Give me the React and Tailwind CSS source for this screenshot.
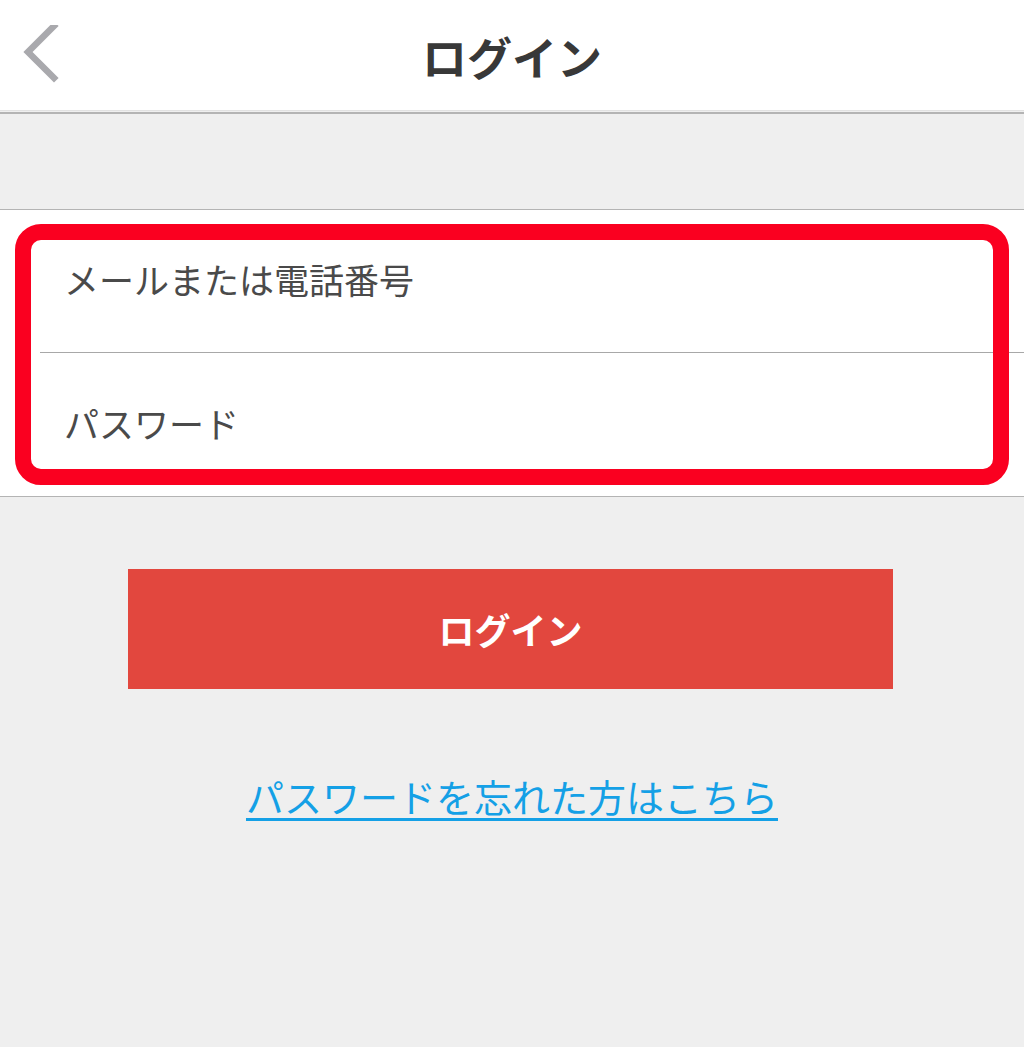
export default function App() {
  return (
    <div
      className="min-h-[1047px] bg-[#efefef] text-[#4a4a4a]"
      style={{ fontFamily: '"Noto Sans CJK JP", "Noto Sans", sans-serif' }}
    >
      {/* Header */}
      <header className="h-[111px] bg-white border-b border-[#e2e2e2] grid grid-cols-[1fr_auto_1fr] items-center">
        <div className="pl-[21px] flex items-center">
          <svg width="40" height="60" viewBox="0 0 40 60" fill="none">
            <path d="M34 4 L8 30 L34 56" stroke="#a9a9ad" strokeWidth="6.5" strokeLinecap="square" strokeLinejoin="miter" transform="translate(-1 -3)" />
          </svg>
        </div>
        <h1 className="text-[45px] font-bold text-[#383838] leading-none pt-[2px]">ログイン</h1>
        <div />
      </header>

      {/* Spacer */}
      <div className="h-[98px] border-t-2 border-b border-[#b4b4b4] mt-[1px]" />

      {/* Fields */}
      <div className="relative bg-white border-b border-[#b4b4b4]">
        <div className="h-[142px] flex items-center pl-[64px] pb-[4px] text-[35px]">メールまたは電話番号</div>
        <div className="ml-[40px] border-t border-[#a8a8a8]" />
        <div className="h-[143px] flex items-center pl-[64px] pb-[2px] text-[35px]">パスワード</div>
        <div className="absolute left-[15px] right-[15px] top-[14px] bottom-[11px] border-[16px] border-[#fa0020] rounded-[26px] pointer-events-none" />
      </div>

      {/* Button */}
      <div className="pt-[72px] pl-[128px] pr-[131px]">
        <button className="w-full h-[120px] bg-[#e2473e] text-white text-[36px] font-bold flex items-center justify-center">
          ログイン
        </button>
      </div>

      {/* Link */}
      <div className="pt-[88px] flex justify-center">
        <a href="#" className="text-[38px] text-[#14a0e6] underline underline-offset-[6px] decoration-[3px] leading-none">
          パスワードを忘れた方はこちら
        </a>
      </div>
    </div>
  );
}
